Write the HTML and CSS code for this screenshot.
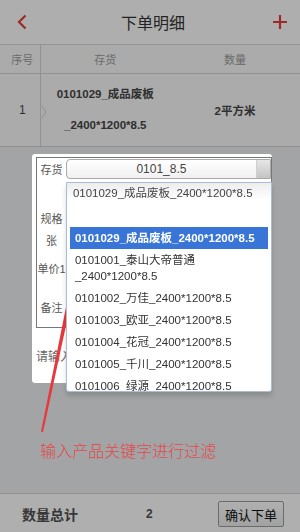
FILE: index.html
```html
<!DOCTYPE html>
<html lang="zh-CN">
<head>
    <meta charset="UTF-8">
    <meta name="viewport" content="width=device-width, initial-scale=1.0">
    <title>下单明细</title>
    <link rel="stylesheet" href="styles.css">
</head>
<body>
    <div class="page">
        <header class="topbar">
            <a class="back">
                <svg width="10" height="16" viewBox="0 0 10 16"><path d="M8.5 1.5 L2 8 L8.5 14.5" fill="none" stroke="currentColor" stroke-width="2.2"/></svg>
            </a>
            <h1>下单明细</h1>
            <a class="add">
                <svg width="14" height="14" viewBox="0 0 14 14"><path d="M7 0 V14 M0 7 H14" fill="none" stroke="currentColor" stroke-width="2.2"/></svg>
            </a>
        </header>
        <table class="orders">
            <thead>
                <tr>
                    <th class="col-no">序号</th>
                    <th class="col-item">存货</th>
                    <th>数量</th>
                </tr>
            </thead>
            <tbody>
                <tr>
                    <td class="col-no">1</td>
                    <td class="col-item item">
                        <svg class="chevron" width="6" height="14" viewBox="0 0 6 14"><path d="M1 1 L5 7 L1 13" fill="none" stroke="#cfcfcf" stroke-width="1"/></svg>
                        0101029_成品废板<br>_2400*1200*8.5
                    </td>
                    <td class="qty">2平方米</td>
                </tr>
            </tbody>
        </table>
        <div class="content"></div>
        <footer class="totals">
            <span class="total-label">数量总计</span>
            <span class="total-value">2</span>
            <button class="confirm">确认下单</button>
        </footer>
    </div>

    <div class="mask"></div>

    <div class="dialog">
        <div class="form-box">
            <div class="form-row row-stock">
                <label>存货</label>
                <div class="chosen">
                    <div class="chosen-single">
                        <span>0101_8.5</span>
                        <i class="chosen-arrow"></i>
                    </div>
                    <div class="chosen-drop">
                        <div class="chosen-search">0101029_成品废板_2400*1200*8.5</div>
                        <ul class="chosen-results">
                            <li class="highlighted">0101029_成品废板_2400*1200*8.5</li>
                            <li>0101001_泰山大帝普通_2400*1200*8.5</li>
                            <li>0101002_万佳_2400*1200*8.5</li>
                            <li>0101003_欧亚_2400*1200*8.5</li>
                            <li>0101004_花冠_2400*1200*8.5</li>
                            <li>0101005_千川_2400*1200*8.5</li>
                            <li>0101006_绿源_2400*1200*8.5</li>
                        </ul>
                    </div>
                </div>
            </div>
            <div class="form-row row-spec"><label>规格</label></div>
            <div class="form-row row-unit"><label>张</label></div>
            <div class="form-row row-price"><label>单价1</label></div>
            <div class="form-row row-note"><label>备注</label></div>
        </div>
        <p class="hint">请输入</p>
    </div>

    <svg class="note-arrow" width="300" height="532" viewBox="0 0 300 532">
        <polygon points="88,211 90.3,231.9 86.35,231.1 43,432.2 41,431.8 81.45,230.1 77.5,229.3" fill="#e8383b"/>
    </svg>
    <p class="note-text">输入产品关键字进行过滤</p>
</body>
</html>
```

FILE: styles.css
```css
* {
    box-sizing: border-box;
}
body {
    margin: 0;
    font-family: "Liberation Sans", "Noto Sans CJK SC", sans-serif;
    font-size: 12px;
    color: #444;
    background: #eaebee;
}
.page {
    display: flex;
    flex-direction: column;
    height: 532px;
}
.topbar {
    height: 45px;
    display: flex;
    align-items: center;
    justify-content: space-between;
    padding: 0 13px 0 17px;
    background: #fafafa;
    border-bottom: 1px solid #d4d4d4;
}
.topbar a {
    display: flex;
    color: #e33c3c;
}
.topbar h1 {
    margin: 0 0 0 6px;
    font-size: 16px;
    font-weight: normal;
    color: #333;
}
.orders {
    width: 100%;
    border-collapse: collapse;
    background: #f5f5f5;
}
.orders th {
    height: 28px;
    font-size: 11px;
    font-weight: normal;
    color: #999;
    border-bottom: 1px solid #d0d0d0;
}
.orders td {
    height: 73px;
    text-align: center;
    border-bottom: 1px solid #d0d0d0;
}
.orders .col-no {
    width: 40px;
    border-right: 1px solid #d0d0d0;
    padding-left: 6px;
}
.orders .col-item {
    width: 130px;
}
.item {
    position: relative;
    font-size: 11.5px;
    font-weight: bold;
    line-height: 31px;
}
.chevron {
    position: absolute;
    left: 0;
    top: 31px;
}
.qty {
    font-size: 11.5px;
    font-weight: bold;
}
.content {
    flex: 1;
}
.totals {
    height: 39px;
    display: flex;
    align-items: center;
    padding: 2px 16px 0 22px;
    background: #fbfbfb;
    border-top: 1px solid #d2d2d2;
}
.total-label {
    width: 124px;
    font-size: 14px;
    font-weight: bold;
    color: #505050;
}
.total-value {
    flex: 1;
    font-size: 12px;
    font-weight: bold;
    color: #505050;
}
.confirm {
    width: 66px;
    height: 26px;
    padding: 0;
    font-family: inherit;
    font-size: 13px;
    color: #111;
    background: linear-gradient(#fdfdfd, #e8e8e8);
    border: 1px solid #9a9a9a;
    border-radius: 2px;
}

/* modal */
.mask {
    position: fixed;
    inset: 0;
    background: rgba(0, 0, 0, 0.3);
}
.dialog {
    position: absolute;
    left: 32px;
    top: 154px;
    width: 240px;
    height: 229px;
    padding: 3px 0 0 4px;
    background: #fff;
    border-radius: 3px;
}
.form-box {
    width: 236px;
    border: 1px solid #777;
}
.form-row {
    display: flex;
    align-items: center;
}
.form-row label {
    width: 29px;
    text-align: center;
    font-size: 11px;
    color: #555;
}
.row-stock { height: 22px; }
.row-spec { height: 50px; align-items: flex-end; padding-bottom: 4px; }
.row-unit { height: 20px; }
.row-price { height: 36px; }
.row-note { height: 41px; }
.hint {
    margin: 19px 0 0;
    font-size: 12px;
    color: #666;
}

/* chosen select */
.chosen {
    position: relative;
    width: 206px;
    height: 20px;
}
.chosen-single {
    display: flex;
    height: 20px;
    border: 1px solid #aaa;
    border-radius: 4px 0 0 4px;
    background: linear-gradient(#fff, #f0f0f0);
    color: #444;
}
.chosen-single span {
    flex: 1;
    text-align: center;
    line-height: 18px;
    font-size: 12px;
}
.chosen-arrow {
    width: 14px;
    background: linear-gradient(#e6e6e6, #c4c4c4);
    border-left: 1px solid #d0d0d0;
}
.chosen-drop {
    position: absolute;
    left: 0;
    top: 23px;
    z-index: 2;
    width: 206px;
    height: 210px;
    overflow: hidden;
    background: #fff;
    border: 1px solid #a9bddb;
    border-radius: 0 0 3px 3px;
    box-shadow: 0 4px 5px rgba(0, 0, 0, 0.15);
}
.chosen-search {
    height: 20px;
    padding-left: 6px;
    line-height: 20px;
    font-size: 11.5px;
    color: #444;
    background: linear-gradient(#ededed, #fff 85%);
}
.chosen-results {
    margin: 24px 3px 0;
    padding: 0;
    list-style: none;
}
.chosen-results li {
    padding: 3px 5px;
    line-height: 16px;
    font-size: 11.5px;
    color: #333;
}
.chosen-results li.highlighted {
    background: #3875d7;
    color: #fff;
    font-weight: bold;
}

/* annotation */
.note-arrow {
    position: absolute;
    left: 0;
    top: 0;
    pointer-events: none;
}
.note-text {
    position: absolute;
    left: 40px;
    top: 438px;
    margin: 0;
    font-family: "Noto Sans CJK SC", sans-serif;
    font-size: 16px;
    font-weight: 300;
    color: #ea4446;
}
```
